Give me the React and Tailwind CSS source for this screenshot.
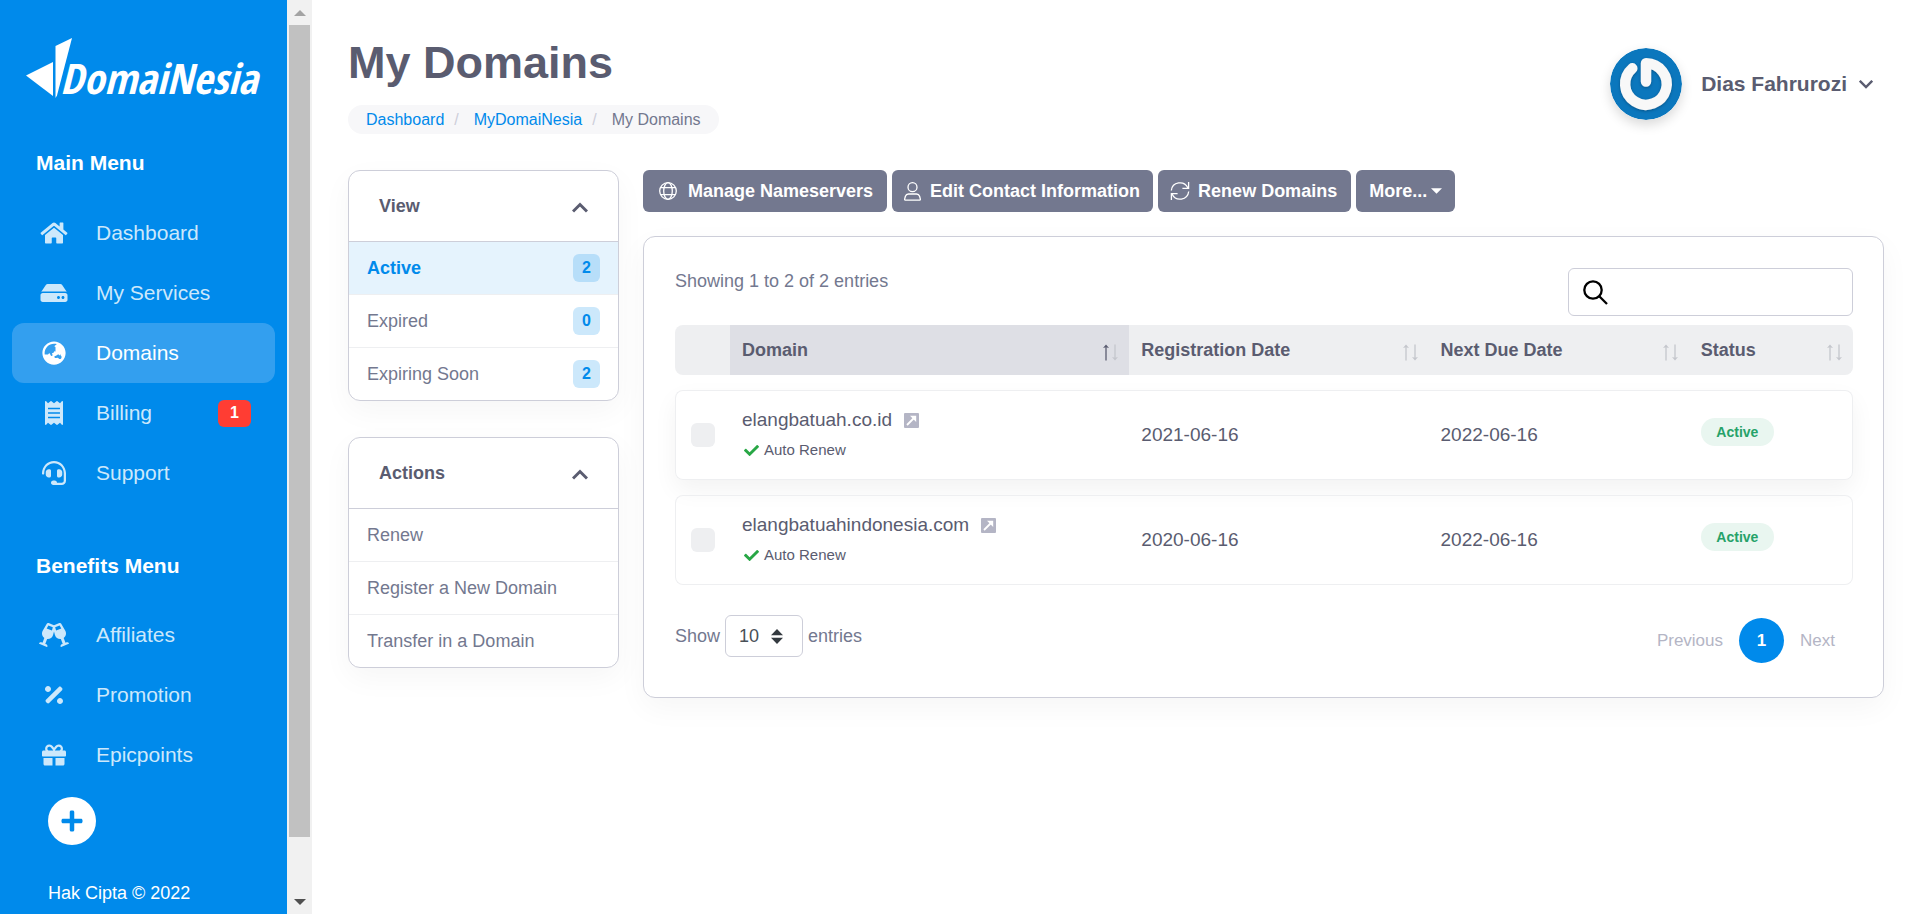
import React from "react";
import {
  FaHome,
  FaHdd,
  FaGlobeAsia,
  FaReceipt,
  FaHeadset,
  FaGlassCheers,
  FaPercentage,
  FaGift,
  FaPlus,
  FaCheck,
} from "react-icons/fa";

const mainMenu = [
  { label: "Dashboard", icon: FaHome },
  { label: "My Services", icon: FaHdd },
  { label: "Domains", icon: FaGlobeAsia, active: true },
  { label: "Billing", icon: FaReceipt, badge: 1 },
  { label: "Support", icon: FaHeadset },
];

const benefitsMenu = [
  { label: "Affiliates", icon: FaGlassCheers },
  { label: "Promotion", icon: FaPercentage },
  { label: "Epicpoints", icon: FaGift },
];

const views = [
  { label: "Active", count: 2, active: true },
  { label: "Expired", count: 0 },
  { label: "Expiring Soon", count: 2 },
];

const actions = ["Renew", "Register a New Domain", "Transfer in a Domain"];

const domains = [
  { name: "elangbatuah.co.id", registered: "2021-06-16", due: "2022-06-16", raised: true },
  { name: "elangbatuahindonesia.com", registered: "2020-06-16", due: "2022-06-16" },
];

function Logo() {
  return (
    <a href="#" aria-label="DomaiNesia" className="mx-[26px] flex h-[60px] items-end text-white">
      <svg width="46" height="60" viewBox="0 0 46 60" fill="currentColor" className="shrink-0" aria-hidden="true">
        <path d="M0 37.5 27 24v34z" />
        <path d="M29.500 8 46 0 31 57.500 29.500 60z" />
      </svg>
      <span className="-ml-3 font-['Open_Sans_Condensed','Roboto_Condensed','Liberation_Sans_Narrow','Liberation_Sans',sans-serif] text-[42px] leading-[40px] font-bold italic">
        DomaiNesia
      </span>
    </a>
  );
}

function MenuItem({ label, icon: Icon, active, badge }) {
  return (
    <li>
      <a
        href="#"
        className={`mx-3 flex h-[60px] items-center rounded-xl pr-6 pl-[27px] text-[21px] ${
          active ? "bg-[#339fef] text-white" : "text-[#cce8fb]"
        }`}
      >
        <Icon className="h-6 w-[30px] shrink-0" />
        <span className="ml-[27px] flex-1">{label}</span>
        {badge && (
          <span className="flex h-[27px] w-[33px] items-center justify-center rounded-md bg-[#ff3d33] text-base font-bold text-white">
            {badge}
          </span>
        )}
      </a>
    </li>
  );
}

function Sidebar() {
  return (
    <aside className="sticky top-0 flex h-screen w-[287px] shrink-0 flex-col overflow-hidden bg-[#008aeb] pt-[38px]">
      <Logo />
      <h2 className="mt-[53px] ml-9 text-[21px] leading-6 font-bold text-white">Main Menu</h2>
      <ul className="mt-7">
        {mainMenu.map((item) => (
          <MenuItem key={item.label} {...item} />
        ))}
      </ul>
      <h2 className="mt-[51px] ml-9 text-[21px] leading-6 font-bold text-white">Benefits Menu</h2>
      <ul className="mt-[27px]">
        {benefitsMenu.map((item) => (
          <MenuItem key={item.label} {...item} />
        ))}
      </ul>
      <button
        type="button"
        aria-label="Add"
        className="mt-3 ml-12 flex size-12 shrink-0 items-center justify-center rounded-full bg-white text-[#008aeb]"
      >
        <FaPlus className="size-6" />
      </button>
      <p className="mt-9 ml-12 text-lg leading-6 text-white">Hak Cipta © 2022</p>
    </aside>
  );
}

function ScrollRail() {
  return (
    <div aria-hidden="true" className="sticky top-0 flex h-screen w-[25px] shrink-0 flex-col bg-[#f1f1f1]">
      <div className="flex h-[25px] items-center justify-center">
        <svg width="12" height="6" viewBox="0 0 12 6" fill="#a3a3a3">
          <path d="M6 0l6 6H0z" />
        </svg>
      </div>
      <div className="mr-0.5 ml-0.5 flex-[812] bg-[#c1c1c1]" />
      <div className="flex-[52]" />
      <div className="flex h-[25px] items-center justify-center">
        <svg width="12" height="6" viewBox="0 0 12 6" fill="#505050">
          <path d="M0 0h12L6 6z" />
        </svg>
      </div>
    </div>
  );
}

function Avatar() {
  return (
    <svg viewBox="0 0 72 72" className="size-[72px] rounded-full shadow-[0_5px_12px_rgba(0,0,0,0.15)]" aria-hidden="true">
      <defs>
        <filter id="soft" x="-20%" y="-20%" width="140%" height="140%">
          <feDropShadow dx="0" dy="1" stdDeviation="1.500" floodColor="#003a66" floodOpacity="0.6" />
        </filter>
      </defs>
      <circle cx="36" cy="36" r="36" fill="#0b77bd" />
      <path
        d="M36 33.500V15.200A20.800 20.800 0 1 1 22.300 20.300"
        fill="none"
        stroke="#f8f8f8"
        strokeWidth="10.400"
        strokeLinecap="round"
        strokeLinejoin="round"
        filter="url(#soft)"
      />
    </svg>
  );
}

function Header() {
  return (
    <header className="flex items-start justify-between">
      <div>
        <h1 className="text-[45px] leading-[54px] font-bold text-[#5a5c70]">My Domains</h1>
        <nav aria-label="Breadcrumb" className="mt-[15px]">
          <ol className="flex h-[29px] items-center rounded-full bg-[#f7f7f9] px-[18px] text-base">
            <li>
              <a href="#" className="text-[#008aeb]">Dashboard</a>
              <span className="mr-[15px] ml-2.5 text-[#cdced9]">/</span>
            </li>
            <li>
              <a href="#" className="text-[#008aeb]">MyDomaiNesia</a>
              <span className="mr-[15px] ml-2.5 text-[#cdced9]">/</span>
            </li>
            <li className="text-[#73788f]">My Domains</li>
          </ol>
        </nav>
      </div>
      <button type="button" className="mt-3 mr-[11px] flex items-center text-[21px] font-bold text-[#5a5c70]">
        <Avatar />
        <span className="ml-[19px]">Dias Fahrurozi</span>
        <svg width="14" height="9" viewBox="0 0 14 9" fill="none" stroke="currentColor" strokeWidth="2.400" className="ml-3" aria-hidden="true">
          <path d="M.8.800 7 7l6.200-6.200" />
        </svg>
      </button>
    </header>
  );
}

function SidePanel({ title, children }) {
  return (
    <section className="overflow-hidden rounded-xl border border-[#cdced9] bg-white shadow-[0_10px_30px_rgba(0,0,0,0.04)]">
      <h2>
        <button
          type="button"
          aria-expanded="true"
          className="flex h-[71px] w-full items-center justify-between border-b border-[#cdced9] pr-[30px] pl-[30px] text-lg font-bold text-[#5a5c70]"
        >
          {title}
          <svg width="16" height="11" viewBox="0 0 16 11" fill="none" stroke="currentColor" strokeWidth="3" className="mt-0.5" aria-hidden="true">
            <path d="M1 9.500 8 2.500l7 7" />
          </svg>
        </button>
      </h2>
      <ul className="divide-y divide-[#eeeff1]">{children}</ul>
    </section>
  );
}

function GlobeIcon() {
  return (
    <svg width="18" height="18" viewBox="0 0 18 18" fill="none" stroke="currentColor" strokeWidth="1.300" aria-hidden="true">
      <circle cx="9" cy="9" r="8.300" />
      <ellipse cx="9" cy="9" rx="4.300" ry="8.300" />
      <path d="M1.500 5.600h15M1.500 12.600h15" />
    </svg>
  );
}

function PersonIcon() {
  return (
    <svg width="17" height="19" viewBox="0 0 17 19" fill="none" stroke="currentColor" strokeWidth="1.300" aria-hidden="true">
      <circle cx="8.500" cy="5.200" r="4.500" />
      <path d="M4.500 12h8c1.700 0 2.600.8 3.100 2.300l.7 2.600c.2.800-.2 1.300-1 1.300H1.700c-.8 0-1.200-.5-1-1.300l.7-2.600C1.900 12.800 2.800 12 4.500 12z" />
    </svg>
  );
}

function ReloadIcon() {
  return (
    <svg width="20" height="20" viewBox="0 0 20 20" fill="none" stroke="currentColor" strokeWidth="1.300" aria-hidden="true">
      <path d="M1.300 9.500A8.700 8.700 0 0 1 17.800 6.800M18.600 1v6.300h-6.200M18.700 10.500A8.700 8.700 0 0 1 2.200 13.200M1.400 19v-6.300h6.200" />
    </svg>
  );
}

function ToolButton({ className = "", children }) {
  return (
    <button
      type="button"
      className={`flex h-[42px] items-center rounded-md bg-[#73788f] text-lg font-bold text-white ${className}`}
    >
      {children}
    </button>
  );
}

function SortArrows({ ascending }) {
  return (
    <svg width="17" height="17" viewBox="0 0 17 17" className="mt-1 shrink-0" aria-hidden="true">
      <g className={ascending ? "text-[#5a5c70]" : "text-[#c4c6cc]"}>
        <path d="M4 2v14.500" stroke="currentColor" strokeWidth="1.300" />
        <path d="M4 .5 7 4 4 3.200 1 4z" fill="currentColor" />
      </g>
      <g className="text-[#c4c6cc]">
        <path d="M13 .5V15" stroke="currentColor" strokeWidth="1.300" />
        <path d="M13 16.500l3-3.500-3 .8-3-.8z" fill="currentColor" />
      </g>
    </svg>
  );
}

function SortHeader({ label, ascending, className = "" }) {
  return (
    <th scope="col" aria-sort={ascending ? "ascending" : undefined} className={`p-0 ${className}`}>
      <button type="button" className="flex w-full items-center justify-between pr-2.5 pl-3 font-bold">
        {label}
        <SortArrows ascending={ascending} />
      </button>
    </th>
  );
}

function DomainRow({ name, registered, due, raised }) {
  return (
    <tr className={`h-[90px] rounded-lg ${raised ? "shadow-[0_10px_25px_rgba(0,0,0,0.05)]" : ""}`}>
      <td className="rounded-l-lg border-y border-l border-[#eeeff1] p-0 pl-[15px]">
        <input
          type="checkbox"
          aria-label={`Select ${name}`}
          className="block size-6 appearance-none rounded-md bg-[#eeeff1]"
        />
      </td>
      <td className="border-y border-[#eeeff1] p-0 pl-3">
        <a href="#" className="flex h-[30px] items-center">
          {name}
          <svg width="15" height="15" viewBox="0 0 15 15" className="ml-3" aria-hidden="true">
            <rect width="15" height="15" rx="1" fill="#b4b5c5" />
            <path d="M3 12l7.500-7.500" fill="none" stroke="#fff" strokeWidth="1.800" />
            <path d="M6 2.800h6.200V9z" fill="#fff" />
          </svg>
        </a>
        <span className="flex h-[30px] items-center gap-[5px] pl-0.5 text-[15px]">
          <FaCheck className="size-[15px] text-[#28a745]" />
          Auto Renew
        </span>
      </td>
      <td className="border-y border-[#eeeff1] p-0 pl-3">{registered}</td>
      <td className="border-y border-[#eeeff1] p-0 pl-3">{due}</td>
      <td className="rounded-r-lg border-y border-r border-[#eeeff1] p-0 pb-1.5 pl-3">
        <span className="flex h-7 w-[73px] items-center justify-center rounded-full bg-[#e9f6f0] text-sm font-bold text-[#26a269]">
          Active
        </span>
      </td>
    </tr>
  );
}

function DomainTable() {
  return (
    <table className="-mt-1.5 w-full table-fixed border-separate border-spacing-x-0 border-spacing-y-[15px] text-left text-[#5a5c70]">
      <colgroup>
        <col className="w-[55px]" />
        <col className="w-[33.9%]" />
        <col className="w-[25.4%]" />
        <col className="w-[22.1%]" />
        <col />
      </colgroup>
      <thead>
        <tr className="h-[50px] text-lg">
          <th scope="col" aria-label="Select" className="rounded-l-lg bg-[#eeeff1] p-0" />
          <SortHeader label="Domain" ascending className="bg-[#dedfe5]" />
          <SortHeader label="Registration Date" className="bg-[#eeeff1]" />
          <SortHeader label="Next Due Date" className="bg-[#eeeff1]" />
          <SortHeader label="Status" className="rounded-r-lg bg-[#eeeff1]" />
        </tr>
      </thead>
      <tbody className="text-[19px]">
        {domains.map((domain) => (
          <DomainRow key={domain.name} {...domain} />
        ))}
      </tbody>
    </table>
  );
}

function TableFooter() {
  return (
    <div className="mt-[15px] flex items-start justify-between">
      <label className="flex items-center gap-[5px] text-lg text-[#73788f]">
        Show
        <span className="relative">
          <select
            defaultValue="10"
            className="block h-[42px] w-[78px] appearance-none rounded-md border border-[#cdced9] bg-white pl-[13px] text-lg text-[#495057]"
          >
            <option>10</option>
            <option>25</option>
            <option>50</option>
          </select>
          <svg
            width="12"
            height="15"
            viewBox="0 0 12 15"
            fill="#343a40"
            className="pointer-events-none absolute top-[14px] right-5"
            aria-hidden="true"
          >
            <path d="M6 0l6 6.200H0zM6 15l6-6.200H0z" />
          </svg>
        </span>
        entries
      </label>
      <nav aria-label="Pagination" className="mt-[3px] mr-[18px] flex items-center gap-4 text-[17px] text-[#b4b5c5]">
        <button type="button">Previous</button>
        <button type="button" aria-current="page" className="size-[45px] rounded-full bg-[#008aeb] font-bold text-white">
          1
        </button>
        <button type="button">Next</button>
      </nav>
    </div>
  );
}

export default function App() {
  return (
    <div className="flex min-h-screen bg-white font-['Liberation_Sans',Arial,sans-serif]">
      <Sidebar />
      <ScrollRail />
      <main className="min-w-0 flex-1 px-9 pt-9 pb-9">
        <Header />
        <div className="mt-9 flex items-start gap-6">
          <div className="flex w-[271px] shrink-0 flex-col gap-9">
            <SidePanel title="View">
              {views.map(({ label, count, active }) => (
                <li key={label}>
                  <a
                    href="#"
                    className={`flex h-[52px] items-center justify-between px-[18px] text-lg ${
                      active ? "bg-[#e5f3fd] font-bold text-[#008aeb]" : "text-[#73788f]"
                    }`}
                  >
                    {label}
                    <span
                      className={`flex h-7 w-[27px] items-center justify-center rounded-md text-base font-bold text-[#008aeb] ${
                        active ? "bg-[#b7def9]" : "bg-[#cce8fb]"
                      }`}
                    >
                      {count}
                    </span>
                  </a>
                </li>
              ))}
            </SidePanel>
            <SidePanel title="Actions">
              {actions.map((label) => (
                <li key={label}>
                  <a href="#" className="flex h-[52px] items-center px-[18px] text-lg text-[#73788f]">
                    {label}
                  </a>
                </li>
              ))}
            </SidePanel>
          </div>
          <div className="min-w-0 flex-1">
            <div className="flex flex-wrap gap-[5px]">
              <ToolButton className="gap-[11px] pr-3.5 pl-4">
                <GlobeIcon />
                Manage Nameservers
              </ToolButton>
              <ToolButton className="gap-[9px] pr-[13px] pl-3">
                <PersonIcon />
                Edit Contact Information
              </ToolButton>
              <ToolButton className="gap-2 pr-3.5 pl-3">
                <ReloadIcon />
                Renew Domains
              </ToolButton>
              <ToolButton className="gap-1 px-[13px]">
                More...
                <svg width="11" height="6" viewBox="0 0 12 6" fill="currentColor" aria-hidden="true">
                  <path d="M0 0h12L6 6z" />
                </svg>
              </ToolButton>
            </div>
            <section className="mt-6 rounded-xl border border-[#cdced9] bg-white pt-[31px] pr-[30px] pb-[34px] pl-[31px] shadow-[0_10px_30px_rgba(0,0,0,0.04)]">
              <div className="flex items-start justify-between">
                <p className="text-lg leading-[26px] text-[#73788f]">Showing 1 to 2 of 2 entries</p>
                <label className="flex h-12 w-[285px] items-center rounded-md border border-[#cdced9] pl-3.5">
                  <svg width="25" height="25" viewBox="0 0 25 25" fill="none" stroke="#000" strokeWidth="2.300" aria-hidden="true">
                    <circle cx="10" cy="10" r="8.700" />
                    <path d="M16 16l8 8" />
                  </svg>
                  <input type="search" aria-label="Search domains" className="ml-3 min-w-0 flex-1 text-lg outline-none" />
                </label>
              </div>
              <DomainTable />
              <TableFooter />
            </section>
          </div>
        </div>
      </main>
    </div>
  );
}
